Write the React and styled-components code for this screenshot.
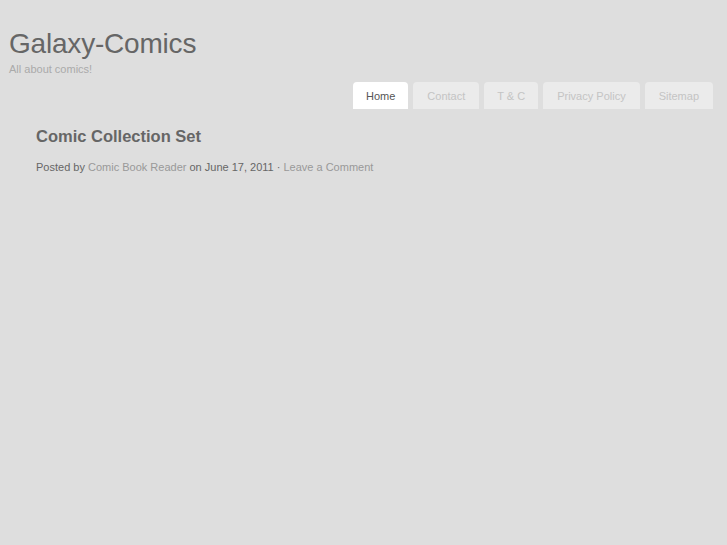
import React from "react";
import styled, { createGlobalStyle } from "styled-components";

const Global = createGlobalStyle`
  html, body { margin: 0; padding: 0; background: #dedede; }
  body { font-family: "Liberation Sans", Arial, sans-serif; }
`;

const Page = styled.div`
  min-height: 545px;
  background: #dedede;
`;

const Header = styled.header`
  padding: 28px 14px 0 9px;
`;

const SiteTitle = styled.h1`
  margin: 0;
  font-size: 28px;
  font-weight: normal;
  line-height: 32px;
  color: #666;
  letter-spacing: -0.2px;
`;

const Tagline = styled.div`
  margin-top: 2px;
  font-size: 11px;
  line-height: 14px;
  color: #aaa;
`;

const Nav = styled.nav`
  display: flex;
  justify-content: flex-end;
  gap: 5px;
  margin-top: 6px;
`;

const Tab = styled.a`
  display: flex;
  align-items: center;
  justify-content: center;
  height: 27px;
  padding: 0 ${p => p.$pad}px;
  border-radius: 4px 4px 0 0;
  background: ${p => (p.$active ? "#fff" : "#ebebeb")};
  color: ${p => (p.$active ? "#555" : "#c4c4c4")};
  font-size: 11px;
  text-decoration: none;
`;

const Post = styled.article`
  padding: 17px 36px 0;
`;

const PostTitle = styled.h2`
  margin: 0;
  font-size: 16.5px;
  font-weight: bold;
  line-height: 20px;
  color: #666;
`;

const Meta = styled.div`
  margin-top: 14px;
  font-size: 11px;
  line-height: 14px;
  color: #666;
`;

const MetaLink = styled.a`
  color: #999;
  text-decoration: none;
`;

const tabs = [
  { label: "Home", active: true, pad: 13 },
  { label: "Contact", pad: 14 },
  { label: "T & C", pad: 13 },
  { label: "Privacy Policy", pad: 14 },
  { label: "Sitemap", pad: 14 },
];

export default function App() {
  return (
    <Page>
      <Global />
      <Header>
        <SiteTitle>Galaxy-Comics</SiteTitle>
        <Tagline>All about comics!</Tagline>
        <Nav>
          {tabs.map(t => (
            <Tab key={t.label} $active={t.active} $pad={t.pad}>
              {t.label}
            </Tab>
          ))}
        </Nav>
      </Header>
      <Post>
        <PostTitle>Comic Collection Set</PostTitle>
        <Meta>
          Posted by <MetaLink>Comic Book Reader</MetaLink> on June 17, 2011 ·{" "}
          <MetaLink>Leave a Comment</MetaLink>
        </Meta>
      </Post>
    </Page>
  );
}
